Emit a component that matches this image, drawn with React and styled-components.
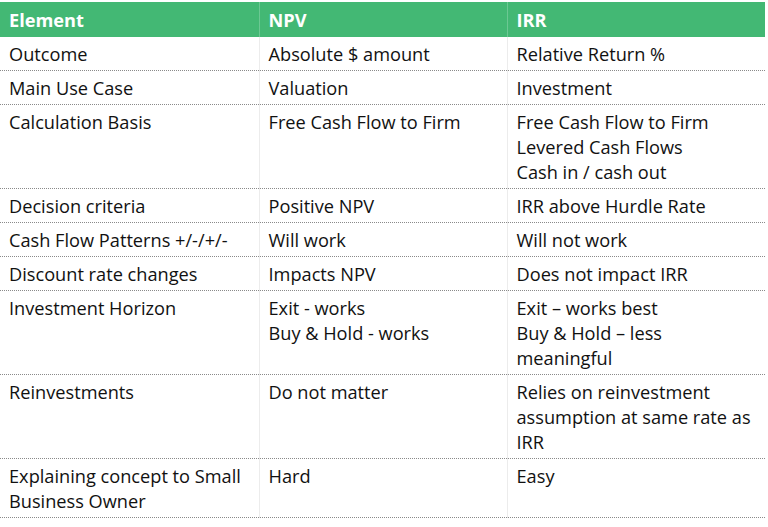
import React from "react";
import styled, { createGlobalStyle } from "styled-components";

const GlobalStyle = createGlobalStyle`
  html, body {
    margin: 0;
    padding: 0;
    background: #ffffff;
  }
  body {
    font-family: "Open Sans", Lato, "Liberation Sans", sans-serif;
  }
`;

const Page = styled.div`
  width: 768px;
  padding-top: 2px;
`;

const Table = styled.table`
  width: 765px;
  border-collapse: collapse;
  table-layout: fixed;
  font-size: 18.2px;
  color: #111;
`;

const HeadCell = styled.th`
  background: #43b874;
  color: #ffffff;
  font-weight: 700;
  text-align: left;
  height: 35px;
  padding: 0 9px;
  box-sizing: border-box;
  border-left: ${(p) => (p.$first ? "none" : "1px solid #6cc893")};
`;

const Row = styled.tr`
  border-bottom: 1px dotted #8a8a8a;
`;

const Cell = styled.td`
  vertical-align: top;
  padding: 5px 9px 3px;
  line-height: 25px;
  white-space: nowrap;
  border-left: ${(p) => (p.$first ? "none" : "1px solid #ececec")};
`;

const rows = [
  [["Outcome"], ["Absolute $ amount"], ["Relative Return %"]],
  [["Main Use Case"], ["Valuation"], ["Investment"]],
  [
    ["Calculation Basis"],
    ["Free Cash Flow to Firm"],
    ["Free Cash Flow to Firm", "Levered Cash Flows", "Cash in / cash out"],
  ],
  [["Decision criteria"], ["Positive NPV"], ["IRR above Hurdle Rate"]],
  [["Cash Flow Patterns +/-/+/-"], ["Will work"], ["Will not work"]],
  [["Discount rate changes"], ["Impacts NPV"], ["Does not impact IRR"]],
  [
    ["Investment Horizon"],
    ["Exit - works", "Buy & Hold - works"],
    ["Exit \u2013 works best", "Buy & Hold \u2013 less", "meaningful"],
  ],
  [
    ["Reinvestments"],
    ["Do not matter"],
    ["Relies on reinvestment", "assumption at same rate as", "IRR"],
  ],
  [
    ["Explaining concept to Small", "Business Owner"],
    ["Hard"],
    ["Easy"],
  ],
];

const Lines = ({ lines }) =>
  lines.map((l, i) => (
    <React.Fragment key={i}>
      {i > 0 && <br />}
      {l}
    </React.Fragment>
  ));

const App = () => (
  <Page>
    <GlobalStyle />
    <Table>
      <colgroup>
        <col style={{ width: 259 }} />
        <col style={{ width: 248 }} />
        <col style={{ width: 258 }} />
      </colgroup>
      <thead>
        <tr>
          <HeadCell $first>Element</HeadCell>
          <HeadCell>NPV</HeadCell>
          <HeadCell>IRR</HeadCell>
        </tr>
      </thead>
      <tbody>
        {rows.map((r, i) => (
          <Row key={i}>
            {r.map((c, j) => (
              <Cell key={j} $first={j === 0}>
                <Lines lines={c} />
              </Cell>
            ))}
          </Row>
        ))}
      </tbody>
    </Table>
  </Page>
);

export default App;
